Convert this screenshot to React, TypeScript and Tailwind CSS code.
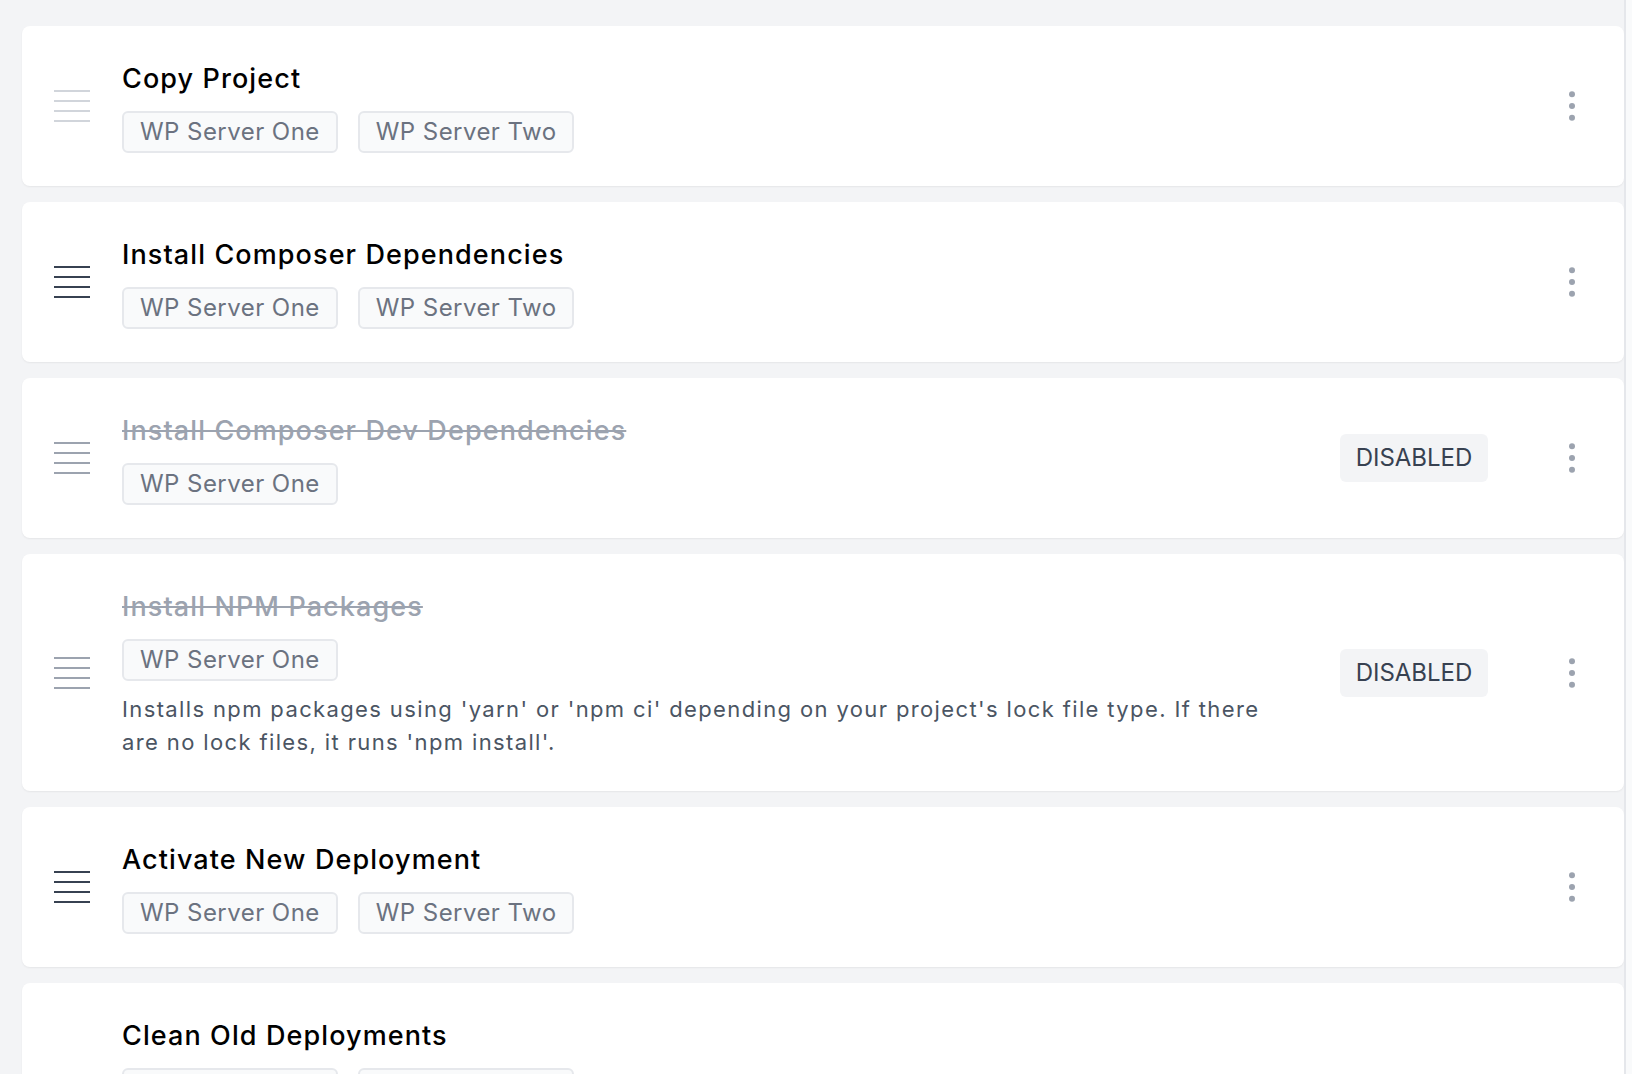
import React from "react";

type Step = {
  title: string;
  servers: string[];
  disabled?: boolean;
  handle: "light" | "dark";
  description?: string;
};

const steps: Step[] = [
  { title: "Copy Project", servers: ["WP Server One", "WP Server Two"], handle: "light" },
  { title: "Install Composer Dependencies", servers: ["WP Server One", "WP Server Two"], handle: "dark" },
  { title: "Install Composer Dev Dependencies", servers: ["WP Server One"], handle: "dark", disabled: true },
  {
    title: "Install NPM Packages",
    servers: ["WP Server One"],
    handle: "dark",
    disabled: true,
    description:
      "Installs npm packages using 'yarn' or 'npm ci' depending on your project's lock file type. If there are no lock files, it runs 'npm install'.",
  },
  { title: "Activate New Deployment", servers: ["WP Server One", "WP Server Two"], handle: "dark" },
  {
    title: "Clean Old Deployments",
    servers: ["WP Server One", "WP Server Two"],
    handle: "light",
    description:
      "Removes old deployment releases from your servers, keeping only the most recent ones so that you can roll back quickly if something goes wrong with the current release.",
  },
];

function Handle({ color }: { color: string }) {
  return (
    <svg width="36" height="32" viewBox="0 0 36 32" className="shrink-0" fill="none">
      <line x1="0" y1="1" x2="36" y2="1" stroke={color} strokeWidth="2" />
      <line x1="0" y1="11" x2="36" y2="11" stroke={color} strokeWidth="2" />
      <line x1="0" y1="21" x2="36" y2="21" stroke={color} strokeWidth="2" />
      <line x1="0" y1="31" x2="36" y2="31" stroke={color} strokeWidth="2" />
    </svg>
  );
}

function Dots() {
  return (
    <svg width="8" height="32" viewBox="0 0 8 32" fill="#9ca3af">
      <circle cx="4" cy="4.3" r="3" />
      <circle cx="4" cy="16" r="3" />
      <circle cx="4" cy="27.7" r="3" />
    </svg>
  );
}

function Card({ step }: { step: Step }) {
  const handleColor =
    step.handle === "light" ? "#d1d5db" : step.disabled ? "#9ca3af" : "#374151";
  return (
    <div className="bg-white rounded-lg shadow-[0_1px_2px_rgba(0,0,0,0.06)] flex items-center pl-8 pr-8 py-[33px]">
      <Handle color={handleColor} />
      <div className="ml-8 flex-1 min-w-0">
        <div
          className={
            step.disabled
              ? "text-[27px] leading-[40px] font-medium text-[#9ca3af] line-through tracking-[1.1px]"
              : "text-[27px] leading-[40px] font-medium text-[#000000] tracking-[1.1px]"
          }
        >
          {step.title}
        </div>
        <div className="mt-3 flex gap-[20px]">
          {step.servers.map((s) => (
            <span
              key={s}
              className="h-[42px] px-[16px] flex items-center rounded-md border-2 border-[#e6e8ec] bg-[#f9fafb] text-[24px] text-[#6b7280] tracking-[0.45px]"
            >
              {s}
            </span>
          ))}
        </div>
        {step.description && (
          <p className="mt-3 max-w-[1165px] text-[22px] leading-[32.6px] text-[#4b5563] tracking-[1.37px]">
            {step.description}
          </p>
        )}
      </div>
      {step.disabled && (
        <span className="ml-16 h-[48px] w-[148px] flex items-center justify-center rounded-md bg-[#f3f4f6] text-[24px] text-[#374151]">
          DISABLED
        </span>
      )}
      <div className="w-[40px] ml-16 flex justify-center shrink-0">
        <Dots />
      </div>
    </div>
  );
}

export default function App() {
  return (
    <div
      className="h-[1074px] overflow-hidden bg-[#f3f4f6] flex"
      style={{ fontFamily: "Inter, 'Noto Sans', sans-serif" }}
    >
      <div className="flex-1 pl-[22px] pt-[26px] flex flex-col gap-4">
        {steps.map((s) => (
          <Card key={s.title} step={s} />
        ))}
      </div>
      <div className="w-[8px] shrink-0 border-l-2 border-[#e5e7eb] bg-[#f9fafb]" />
    </div>
  );
}
